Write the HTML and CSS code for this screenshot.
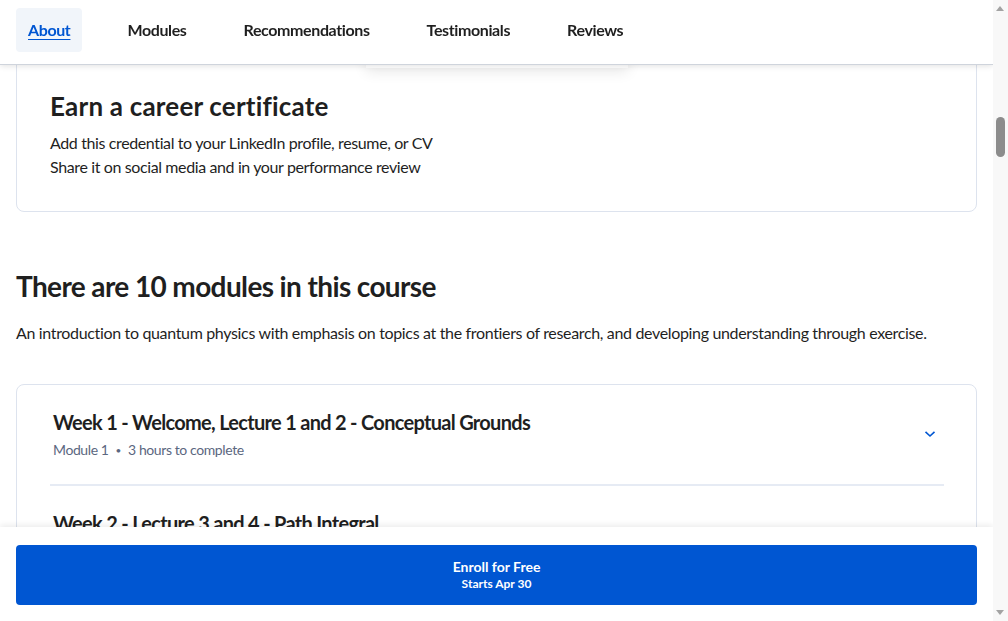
FILE: index.html
```html
<!DOCTYPE html>
<html lang="en">
<head>
<meta charset="utf-8">
<title>Course</title>
<link rel="stylesheet" href="styles.css">
</head>
<body>
<header class="topnav">
  <nav class="tabs">
    <a class="tab active" href="#about">About</a>
    <a class="tab" href="#modules">Modules</a>
    <a class="tab" href="#recs">Recommendations</a>
    <a class="tab" href="#testimonials">Testimonials</a>
    <a class="tab" href="#reviews">Reviews</a>
  </nav>
</header>
<div class="peek"></div>

<main class="page">
  <section class="cert-card">
    <h2 class="cert-title">Earn a career certificate</h2>
    <p class="cert-line">Add this credential to your LinkedIn profile, resume, or CV</p>
    <p class="cert-line">Share it on social media and in your performance review</p>
  </section>

  <section class="modules">
    <h2 class="modules-title">There are 10 modules in this course</h2>
    <p class="modules-desc">An introduction to quantum physics with emphasis on topics at the frontiers of research, and developing understanding through exercise.</p>

    <div class="module-list">
      <div class="module">
        <div class="module-text">
          <h3 class="module-name">Week 1 - Welcome, Lecture 1 and 2 - Conceptual Grounds</h3>
          <div class="module-meta"><span>Module 1</span><span class="dot">•</span><span>3 hours to complete</span></div>
        </div>
        <svg class="chev" width="12" height="8" viewBox="0 0 12 8" aria-hidden="true"><path d="M1.5 1.8 L6 6 L10.5 1.8" fill="none" stroke="#0056d2" stroke-width="1.6"/></svg>
      </div>
      <div class="module">
        <div class="module-text">
          <h3 class="module-name">Week 2 - Lecture 3 and 4 - Path Integral</h3>
          <div class="module-meta"><span>Module 2</span><span class="dot">•</span><span>3 hours to complete</span></div>
        </div>
      </div>
    </div>
  </section>
</main>

<footer class="enroll-bar">
  <button class="enroll-btn" type="button">
    <span class="enroll-main">Enroll for Free</span>
    <span class="enroll-sub">Starts Apr 30</span>
  </button>
</footer>

<div class="scrollbar" aria-hidden="true">
  <span class="sb-up"></span>
  <span class="sb-thumb"></span>
  <span class="sb-down"></span>
</div>
</body>
</html>
```
FILE: styles.css
```css
html, body {
  margin: 0;
  padding: 0;
  height: 100%;
  overflow: hidden;
  background: #fff;
}
body {
  font-family: "Lato", "Open Sans", sans-serif;
  color: #1f1f1f;
  width: 993px;
  position: relative;
}

.topnav {
  position: fixed;
  top: 0;
  left: 0;
  width: 993px;
  height: 64px;
  background: #fff;
  box-shadow: 0 1px 0 #cfd4dc, 0 2px 6px rgba(0, 0, 0, 0.12);
  z-index: 10;
}
.tabs {
  display: flex;
  gap: 33px;
  padding: 8px 16px;
}
.tab {
  display: block;
  height: 44px;
  line-height: 44px;
  padding: 0 12px;
  border-radius: 4px;
  font-size: 16px;
  font-weight: 700;
  letter-spacing: -0.38px;
  color: #1f1f1f;
  text-decoration: none;
}
.tab.active {
  background: #f1f5fa;
  color: #0056d2;
  text-decoration: underline;
  text-underline-offset: 3px;
}

.peek {
  position: absolute;
  top: 40px;
  left: 366px;
  width: 262px;
  height: 28px;
  background: #fff;
  box-shadow: 0 4px 14px rgba(0, 0, 0, 0.09);
  z-index: 5;
}

.page {
  padding: 57px 16px 0;
}

.cert-card {
  border: 1px solid #dde3ee;
  border-radius: 8px;
  padding: 32px 32px 32px 33px;
}
.cert-title {
  margin: 0 0 9px;
  font-size: 26px;
  line-height: 32px;
  font-weight: 700;
  letter-spacing: 0.2px;
}
.cert-line {
  margin: 0;
  font-size: 16px;
  line-height: 24px;
  letter-spacing: -0.38px;
}

.modules-title {
  margin: 56px 0 17px;
  font-size: 28px;
  line-height: 36px;
  font-weight: 700;
  letter-spacing: -0.62px;
}
.modules-desc {
  margin: 0 0 39px;
  font-size: 16px;
  line-height: 24px;
  letter-spacing: -0.34px;
}

.module-list {
  border: 1px solid #dde3ee;
  border-radius: 8px;
  padding: 0 32px 0 33px;
}
.module {
  display: flex;
  align-items: center;
  justify-content: space-between;
  padding: 23px 0 24px;
  border-bottom: 2px solid #e6ebf4;
}
.module-text {
  padding-left: 3px;
}
.module-name {
  margin: 0 0 4px;
  font-size: 20px;
  line-height: 28px;
  font-weight: 700;
  letter-spacing: -0.7px;
}
.module-meta {
  display: flex;
  align-items: center;
  gap: 7px;
  font-size: 14px;
  line-height: 20px;
  letter-spacing: -0.4px;
  color: #5b6780;
}
.dot {
  font-size: 10px;
}
.chev {
  margin-right: 8px;
}

.enroll-bar {
  position: fixed;
  left: 0;
  bottom: 0;
  width: 993px;
  height: 94px;
  background: #fff;
  box-shadow: 0 -2px 6px rgba(0, 0, 0, 0.08);
  padding: 18px 16px 0;
  box-sizing: border-box;
  z-index: 10;
}
.enroll-btn {
  display: flex;
  flex-direction: column;
  align-items: center;
  justify-content: center;
  width: 100%;
  height: 60px;
  border: 0;
  border-radius: 4px;
  background: #0056d2;
  color: #fff;
  font-family: inherit;
  font-weight: 700;
}
.enroll-main {
  font-size: 14px;
  line-height: 18px;
}
.enroll-sub {
  font-size: 12px;
  line-height: 16px;
}

.scrollbar {
  position: fixed;
  top: 0;
  right: 0;
  width: 15px;
  height: 621px;
  background: #f8f8f8;
  z-index: 20;
}
.sb-up, .sb-down {
  position: absolute;
  left: 3px;
  width: 0;
  height: 0;
  border-left: 4.5px solid transparent;
  border-right: 4.5px solid transparent;
}
.sb-up {
  top: 6px;
  border-bottom: 5px solid #a3a3a3;
}
.sb-down {
  bottom: 6px;
  border-top: 5px solid #a3a3a3;
}
.sb-thumb {
  position: absolute;
  left: 3px;
  top: 117px;
  width: 9px;
  height: 40px;
  border-radius: 5px;
  background: #8c8c8c;
}
```
